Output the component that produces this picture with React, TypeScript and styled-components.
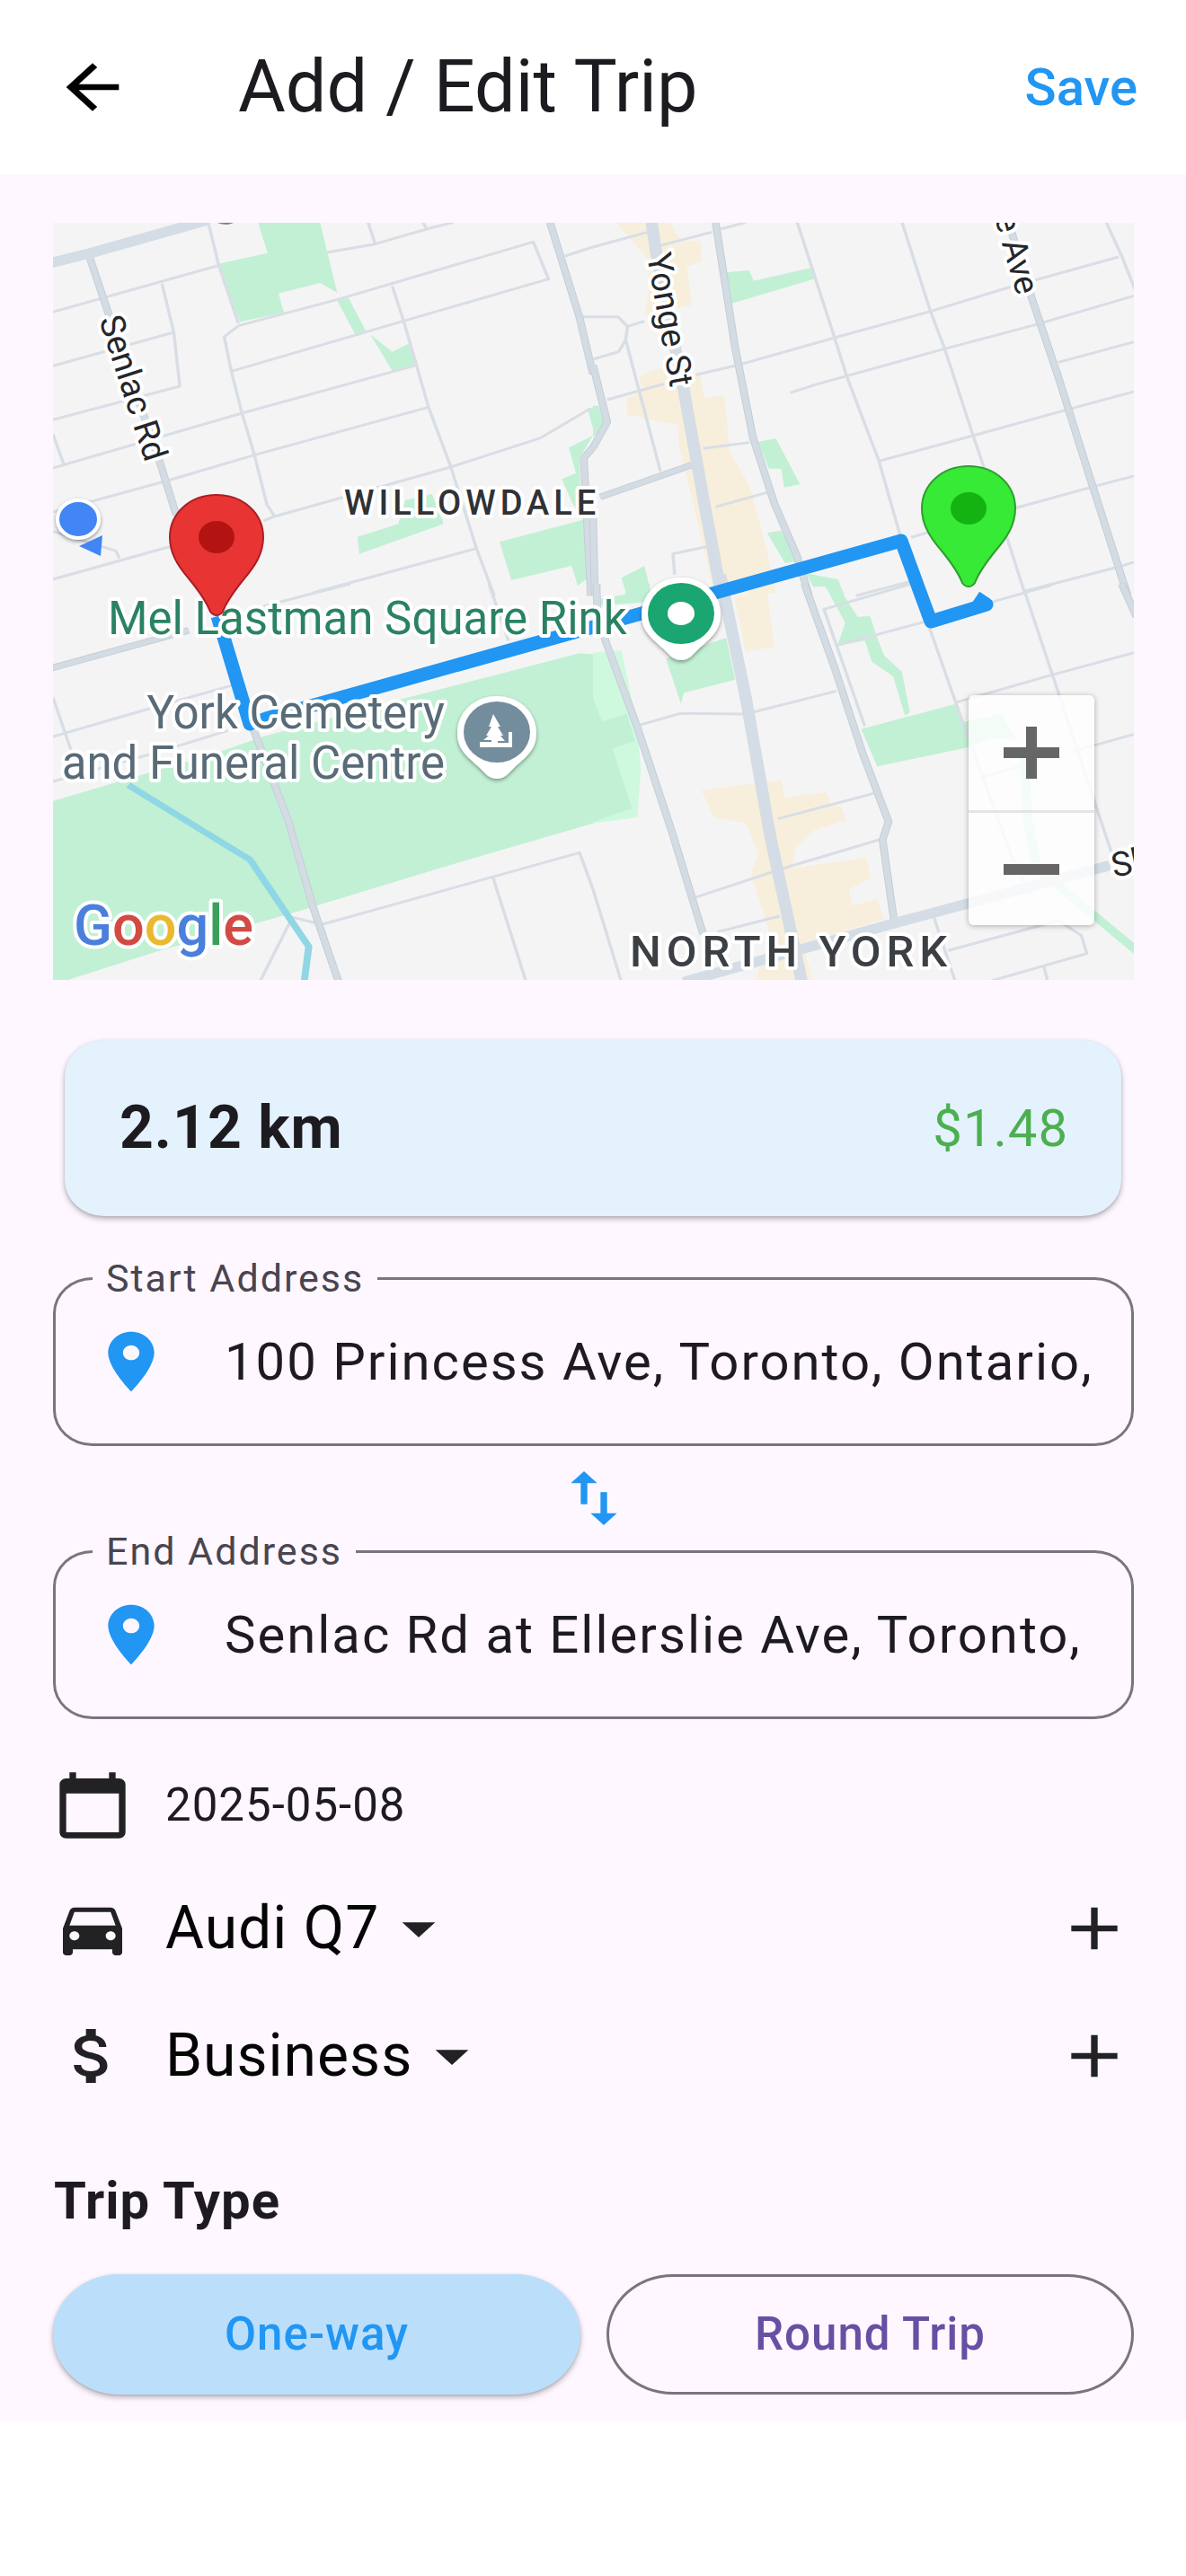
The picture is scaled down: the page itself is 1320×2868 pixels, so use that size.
import React, { useState } from "react";
import styled, { createGlobalStyle } from "styled-components";

const color = {
  ink: "#1d1b20",
  iconInk: "#222124",
  muted: "#49454f",
  outline: "#79747e",
  surface: "#fef7ff",
  blue: "#2196f3",
  purple: "#6750a4",
};

const GlobalStyle = createGlobalStyle`
  *, *::before, *::after { box-sizing: border-box; }
  body {
    margin: 0;
    background: #fff;
    color: ${color.ink};
    font-family: Roboto, "Noto Sans", sans-serif;
  }
  button, input, select { font: inherit; color: inherit; letter-spacing: inherit; }
`;

const Header = styled.header`
  display: flex;
  align-items: center;
  height: 194px;
  padding: 0 54px 0 59px;
  background: #fff;
`;

const Title = styled.h1`
  flex: 1;
  margin: 0 0 0 118px;
  font-size: 81px;
  line-height: 94px;
  font-weight: 400;
`;

const PlainButton = styled.button`
  display: flex;
  align-items: center;
  justify-content: center;
  padding: 0;
  border: 0;
  background: none;
  cursor: pointer;
`;

const SaveButton = styled(PlainButton)`
  color: ${color.blue};
  font-size: 58px;
  line-height: 68px;
  font-weight: 500;
`;

const Main = styled.main`
  display: flex;
  flex-direction: column;
  padding: 54px 58px 30px 59px;
  background: ${color.surface};
`;

const MapFrame = styled.section`
  position: relative;
  line-height: 0;
`;

const MapCanvas = styled.svg`
  display: block;
  width: 100%;
  height: auto;
  font-family: Roboto, "Noto Sans", sans-serif;
`;

const ZoomControls = styled.div`
  position: absolute;
  right: 44px;
  bottom: 61px;
  display: flex;
  flex-direction: column;
  width: 140px;
  border-radius: 6px;
  background: rgba(255, 255, 255, 0.8);
  box-shadow: 0 1px 6px rgba(0, 0, 0, 0.3);
`;

const ZoomButton = styled(PlainButton)`
  height: 128px;
  color: #666;

  & + & {
    border-top: 3px solid #e4e4e4;
  }
`;

const SummaryCard = styled.section`
  display: flex;
  align-items: center;
  justify-content: space-between;
  height: 196px;
  margin: 67px 14px 68px 13px;
  padding: 0 59px 0 61px;
  border-radius: 44px / 40px;
  background: #e3f2fd;
  box-shadow: 0 3px 6px rgba(0, 0, 0, 0.28), 0 1px 3px rgba(0, 0, 0, 0.1);
`;

const Distance = styled.strong`
  font-size: 66px;
  line-height: 76px;
  font-weight: 700;
  letter-spacing: 1px;
`;

const Amount = styled.span`
  font-size: 58px;
  line-height: 68px;
  letter-spacing: 1px;
  color: #4caf50;
`;

const Field = styled.div`
  position: relative;
  display: flex;
  align-items: center;
  gap: 60px;
  height: 188px;
  padding: 0 32px 0 40px;
  border: 3px solid ${color.outline};
  border-radius: 44px / 40px;
`;

const FieldLabel = styled.label`
  position: absolute;
  top: -28px;
  left: 41px;
  padding: 0 15px;
  background: ${color.surface};
  color: ${color.muted};
  font-size: 43px;
  line-height: 52px;
  letter-spacing: 2px;
`;

const FieldInput = styled.input`
  flex: 1;
  min-width: 0;
  padding: 0;
  border: 0;
  outline: 0;
  background: none;
  font-size: 58px;
  line-height: 68px;
  letter-spacing: 2px;
`;

const SwapButton = styled(PlainButton)`
  align-self: center;
  width: 176px;
  height: 116px;
  color: ${color.blue};
`;

const Details = styled.section`
  display: flex;
  flex-direction: column;
  margin-top: 29px;
`;

const DetailRow = styled.div<{ $height: number }>`
  display: flex;
  align-items: center;
  height: ${(p) => p.$height}px;
  color: ${color.iconInk};
`;

const DateButton = styled(PlainButton)`
  margin-left: 37px;
  color: ${color.ink};
  font-size: 51px;
  line-height: 60px;
  letter-spacing: 1px;
`;

const Picker = styled.label`
  display: flex;
  align-items: center;
  margin-right: auto;
  margin-left: 37px;
`;

const Select = styled.select`
  appearance: none;
  field-sizing: content;
  padding: 0;
  border: 0;
  outline: 0;
  background: none;
  color: #050506;
  font-size: 66px;
  line-height: 76px;
  letter-spacing: 1px;
`;

const SectionTitle = styled.h2`
  margin: 56px 0 48px;
  padding-left: 1px;
  font-size: 58px;
  line-height: 68px;
  font-weight: 700;
  letter-spacing: 1px;
`;

const Choices = styled.div`
  display: grid;
  grid-template-columns: 1fr 1fr;
  gap: 29px;
`;

const Choice = styled.button<{ $selected: boolean }>`
  height: 134px;
  padding: 0;
  border: ${(p) => (p.$selected ? "0" : `3px solid ${color.outline}`)};
  border-radius: 74px / 67px;
  background: ${(p) => (p.$selected ? "#bbdefb" : "transparent")};
  box-shadow: ${(p) => (p.$selected ? "0 3px 6px rgba(0, 0, 0, 0.28), 0 1px 3px rgba(0, 0, 0, 0.1)" : "none")};
  color: ${(p) => (p.$selected ? color.blue : color.purple)};
  font-size: 51px;
  line-height: 60px;
  font-weight: 500;
  letter-spacing: 1px;
  cursor: pointer;
`;

const IconSvg = styled.svg`
  flex: none;
  display: block;
  width: 88px;
  height: 80px;
  fill: currentColor;
`;

const Icon = ({ d, tint }: { d: string; tint?: string }) => (
  <IconSvg viewBox="0 0 24 24" preserveAspectRatio="none" aria-hidden="true" color={tint}>
    <path d={d} />
  </IconSvg>
);

const icons = {
  back: "M20 11H7.83l5.59-5.59L12 4l-8 8 8 8 1.41-1.41L7.83 13H20v-2z",
  place:
    "M12 2C8.13 2 5 5.13 5 9c0 5.25 7 13 7 13s7-7.75 7-13c0-3.87-3.13-7-7-7zm0 9.5c-1.38 0-2.5-1.12-2.5-2.5s1.12-2.5 2.5-2.5 2.5 1.12 2.5 2.5-1.12 2.5-2.5 2.5z",
  swap: "M16 17.01V10h-2v7.01h-3L15 21l4-3.99h-3zM9 3L5 6.99h3V14h2V6.99h3L9 3z",
  calendar:
    "M20 3h-1V1h-2v2H7V1H5v2H4c-1.1 0-2 .9-2 2v16c0 1.1.9 2 2 2h16c1.1 0 2-.9 2-2V5c0-1.1-.9-2-2-2zm0 18H4V8h16v13z",
  car: "M18.92 6.01C18.72 5.42 18.16 5 17.5 5h-11c-.66 0-1.21.42-1.42 1.01L3 12v8c0 .55.45 1 1 1h1c.55 0 1-.45 1-1v-1h12v1c0 .55.45 1 1 1h1c.55 0 1-.45 1-1v-8l-2.08-5.99zM6.5 16c-.83 0-1.5-.67-1.5-1.5S5.67 13 6.5 13s1.5.67 1.5 1.5S7.33 16 6.5 16zm11 0c-.83 0-1.5-.67-1.5-1.5s.67-1.5 1.5-1.5 1.5.67 1.5 1.5-.67 1.5-1.5 1.5zM5 11l1.5-4.5h11L19 11H5z",
  money:
    "M11.8 10.9c-2.27-.59-3-1.2-3-2.15 0-1.09 1.01-1.85 2.7-1.85 1.78 0 2.44.85 2.5 2.1h2.21c-.07-1.72-1.12-3.3-3.21-3.81V3h-3v2.16c-1.94.42-3.5 1.68-3.5 3.61 0 2.31 1.91 3.46 4.7 4.13 2.5.6 3 1.48 3 2.41 0 .69-.49 1.79-2.7 1.79-2.06 0-2.87-.92-2.98-2.1h-2.2c.12 2.19 1.76 3.42 3.68 3.83V21h3v-2.15c1.95-.37 3.5-1.5 3.5-3.55 0-2.84-2.43-3.81-4.7-4.4z",
  dropDown: "M7 10l5 5 5-5z",
  add: "M19 13h-6v6h-2v-6H5v-2h6V5h2v6h6v2z",
};

/* Each map tile is drawn in its own 1568-unit-wide grid. */
type Tile = {
  origin: [number, number];
  parks: string;
  brightParks?: string;
  commercial?: string;
  streets: string;
  avenues: string;
  arterials?: string;
  water?: string;
  creek?: string;
};

const tiles: Tile[] = [
  {
    origin: [40, 220],
    parks:
      "M625 83H800L848 318L800 285L683 320L698 385L575 415L510 222L652 185ZM848 345L880 335L932 452L900 460ZM940 455L1003 515L1050 487L1072 555L1003 578ZM905 1133L1020 1090L1040 1010L1115 990L1148 1090L910 1190ZM1305 1150L1545 1075L1555 1270L1525 1297L1508 1230L1338 1278ZM1552 705L1568 700V770ZM1500 835L1568 795L1530 870L1535 1070L1510 1020L1480 940L1520 920Z",
    streets:
      "M48 382L510 228M485 83L515 228L570 420M355 288L388 450L405 630L48 742M48 562L388 450M570 428L530 465L550 580L580 720L615 860L650 1025L672 1065M570 428L850 340L1400 148L1443 272L1035 412L550 580M1003 295L1035 412L1070 555L1105 700L1168 900L1240 1172L1290 1330M48 903L580 720L1070 560M48 1050L380 942L615 860L1105 700M48 790L78 890M640 1080L672 1065L1168 900L1420 803L1560 705M48 1275L380 1165M48 1115L225 1180L235 1205M780 1320L1240 1172M820 183L955 155L1100 105L1175 83M935 83L955 155M1090 83L1100 105M1490 195L1568 165M1530 398H1568",
    avenues: "M150 195L205 390L345 870L395 1060M1447 83L1530 400L1568 590M1568 835L1542 870L1562 1330",
    arterials: "M30 222L155 185L480 76",
  },
  {
    origin: [660, 220],
    parks:
      "M375 250L440 243L452 278L612 235L628 270L388 355ZM465 815L515 805L583 958L538 968L530 905L495 905ZM490 1120L530 1112L580 1215L540 1220ZM80 1270L145 1230L165 1330H95ZM0 695L15 695L35 760L0 800ZM600 1255L690 1275L708 1330L660 1300L620 1300Z",
    commercial:
      "M65 83H215L250 145H305V215L265 230L278 360L145 390L160 290L150 200L100 130ZM130 600L180 570L300 590L315 670L370 660L385 850L440 960L490 1180L515 1320H340L290 1060L240 820V760L95 725V670L140 650Z",
    streets:
      "M0 165L155 115M190 160L335 115M360 105L430 83M0 398H70L97 430L92 475L72 515L0 540M97 430L145 413M92 475L190 915M40 675L200 622M290 592L400 562L680 468L950 380L1170 300L1480 198M575 83L680 468L715 600L805 880L865 1130M870 83L950 380L990 505L1070 795L1100 900L1165 1135L1215 1320M555 652L625 625L990 505L1245 425L1523 328M1445 83L1490 200L1530 320M1310 550L1523 482M805 880L1070 795L1330 710L1523 648M895 1135L1195 1035L1410 965L1523 930M310 838L440 818M345 1033L490 985M230 1260L225 1190L325 1165M740 1330L900 1280M1215 1315L1490 1230L1523 1218",
    avenues:
      "M345 83L400 500L450 800L510 1020L575 1200L608 1330M1170 83L1235 335L1310 600L1400 940L1505 1330M0 560L40 750L0 835M20 1000L285 890M0 1060L5 1330",
    arterials: "M165 83L180 200L255 640L310 1000L362 1330",
  },
  {
    origin: [40, 650],
    parks:
      "M40 728L520 560L640 510L1030 385L1530 232L1568 235V800L1150 945L720 1100L350 1225L85 1325H40Z",
    streets:
      "M640 75L885 0M1275 0L1330 190M48 510L310 420L550 340M48 380L100 560M48 660L350 560L540 490M630 1330L715 1130L725 1115L805 1138L1530 898L1568 1020M1285 975L1380 1330",
    avenues: "M40 283L430 155M610 480L710 790L780 1080L852 1330",
    water: "M260 672L603 922L768 1212L755 1330",
  },
  {
    origin: [660, 650],
    brightParks: "M0 230L80 222L125 470L135 620L125 780L0 800Z",
    parks:
      "M0 380L25 460L95 435L118 525L55 550L110 750L0 795ZM205 250L375 180L400 320L255 365L248 402ZM0 55L90 35L95 0H160V60L0 75ZM650 0H685L745 110L780 108L800 180L820 240L870 295L892 430L878 440L845 310L785 260L765 190L688 207L710 130ZM755 485L1025 400L1040 462L1150 435L1190 520L1120 515L1060 545L800 610Z",
    commercial:
      "M398 45L490 20L510 210L430 228ZM305 690L530 655L540 715L655 695L670 735L700 745L712 790L620 825L570 880L560 950L770 915L782 985L720 1020L730 1075L800 1052L820 1120L590 1200L620 1330H455L500 1180L445 970L465 900L430 800L340 780Z",
    streets:
      "M130 472L245 433L430 435L685 358M520 785L790 700M290 1047L550 945L805 855M350 1163L525 1110M0 1020L80 1330M945 140L1040 460L1180 915L1215 1000M1215 25L1295 310L1460 900M895 0L650 85L765 475M688 205L930 128M1110 65L1290 5M1025 395L1290 305L1523 230M1100 645L1200 610M1350 560L1530 500M960 1115L1020 1330M1000 1225L1310 1125L1375 1175L1390 1235L1110 1330M1270 1280L1280 1330",
    avenues:
      "M595 0L680 280L760 570L832 795L815 855L848 1130M10 0L12 90L35 190L125 480L220 820L310 1170M1488 0L1530 110",
    arterials: "M358 -30L430 380L500 850L588 1330M255 1330L860 1130L1455 940",
    creek: "M1212 540L1225 800L1250 950L1530 1225",
  },
];

const MapTile = ({ tile }: { tile: Tile }) => (
  <g
    transform={`translate(${tile.origin[0]} ${tile.origin[1]}) scale(0.3954 0.3333)`}
    fill="none"
    strokeLinejoin="round"
  >
    {tile.brightParks && <path d={tile.brightParks} fill="#cff9df" />}
    <path d={tile.parks} fill="#c2f0d5" />
    {tile.commercial && <path d={tile.commercial} fill="#f7efdc" />}
    {tile.creek && <path d={tile.creek} stroke="#c2f0d5" strokeWidth="26" />}
    <path d={tile.streets} stroke="#d9dee5" strokeWidth="9" />
    <path d={tile.avenues} stroke="#c5ced8" strokeWidth="22" />
    <path d={tile.avenues} stroke="#d3dbe3" strokeWidth="17" />
    {tile.arterials && <path d={tile.arterials} stroke="#d4dde5" strokeWidth="34" />}
    {tile.water && <path d={tile.water} stroke="#90d7e5" strokeWidth="20" />}
  </g>
);

const MapLabel = styled.text<{ $size: number; $weight?: number; $tracking?: number }>`
  font-size: ${(p) => p.$size}px;
  font-weight: ${(p) => p.$weight ?? 400};
  letter-spacing: ${(p) => p.$tracking ?? 0}px;
  paint-order: stroke;
  stroke: #fff;
  stroke-width: 8px;
  stroke-linejoin: round;
`;

const Pin = ({ x, y, fill, edge, dot }: { x: number; y: number; fill: string; edge: string; dot: string }) => (
  <g transform={`translate(${x} ${y})`}>
    <path
      d="M0-47C30-47 52-26 52 0C52 18 43 32 31 46C18 62 11 72 7 83Q4 87 0 87Q-4 87-7 83C-11 72-18 62-31 46C-43 32-52 18-52 0C-52-26-30-47 0-47Z"
      fill={fill}
      stroke={edge}
      strokeWidth="2"
    />
    <ellipse rx="20" ry="18" fill={dot} />
  </g>
);

const PoiBase = ({ fill }: { fill: string }) => (
  <>
    <path
      d="M0-40C26-40 44-21 44 1C44 20 32 28 20 39L11 48Q0 56-11 48L-20 39C-32 28-44 20-44 1C-44-21-26-40 0-40Z"
      fill="#fff"
      filter="url(#poi-shadow)"
    />
    <ellipse rx="37" ry="34" fill={fill} />
  </>
);

const TripMap = () => (
  <MapCanvas viewBox="59 248 1203 843" role="img" aria-label="Trip route map">
    <defs>
      <filter id="poi-shadow" x="-20%" y="-20%" width="140%" height="140%">
        <feDropShadow dx="0" dy="2" stdDeviation="2" floodOpacity="0.4" />
      </filter>
    </defs>
    <rect x="59" y="248" width="1203" height="843" fill="#f5f4f5" />
    {tiles.map((tile) => (
      <MapTile key={tile.origin.join()} tile={tile} />
    ))}
    <ellipse cx="251" cy="245" rx="11" ry="5" fill="#8d7f86" />

    <path
      d="M242 686L278 806L296 800L1003 602L1036 692L1098 673L1086 665"
      fill="none"
      stroke={color.blue}
      strokeWidth="15"
      strokeLinejoin="round"
    />

    <MapLabel $size={38} fill="#24262a" transform="translate(110 356) rotate(72)">Senlac Rd</MapLabel>
    <MapLabel $size={38} fill="#24262a" transform="translate(720 284) rotate(80)">Yonge St</MapLabel>
    <MapLabel $size={38} fill="#24262a" textAnchor="end" transform="translate(1132 330) rotate(74)">e Ave</MapLabel>
    <MapLabel $size={38} fill="#24262a" transform="translate(1240 977) rotate(-12)">Sh</MapLabel>
    <MapLabel $size={38} $weight={500} $tracking={5} fill="#303235" x="383" y="573">WILLOWDALE</MapLabel>
    <MapLabel $size={49} $weight={500} $tracking={6} fill="#3c3f43" x="701" y="1076">NORTH YORK</MapLabel>
    <MapLabel $size={51} fill="#2a8262" x="120" y="706">Mel Lastman Square Rink</MapLabel>
    <MapLabel $size={51} fill="#586b77" textAnchor="end" x="495" y="811">York Cemetery</MapLabel>
    <MapLabel $size={51} fill="#586b77" textAnchor="end" x="495" y="867">and Funeral Centre</MapLabel>
    <MapLabel $size={63} $weight={500} x="82" y="1052">
      <tspan fill="#4a80dc">G</tspan>
      <tspan fill="#d24a42">o</tspan>
      <tspan fill="#e9b92f">o</tspan>
      <tspan fill="#4a80dc">g</tspan>
      <tspan fill="#3ba05a">l</tspan>
      <tspan fill="#d24a42">e</tspan>
    </MapLabel>

    <g transform="translate(553 815)">
      <PoiBase fill="#738d9c" />
      <path d="M-4-20L4-6H1L7 4H4L9 10H1V12H13V0H17V17H-19V11H-6V9H-15L-9 4H-12L-6-6H-9Z" fill="#fff" />
    </g>
    <g transform="translate(758 683)">
      <PoiBase fill="#1aa571" />
      <ellipse rx="15" ry="13" fill="#fff" />
    </g>

    <ellipse cx="87" cy="578" rx="23" ry="21" fill="#4285f4" stroke="#fff" strokeWidth="4" filter="url(#poi-shadow)" />
    <path d="M88 608L114 596L112 619Z" fill="#4285f4" />
    <Pin x={241} y={598} fill="#e93434" edge="#a82025" dot="#b31412" />
    <Pin x={1078} y={566} fill="#36ea36" edge="#2f9e2f" dot="#14b312" />
  </MapCanvas>
);

const ZoomGlyph = styled.svg`
  display: block;
  width: 62px;
  height: 58px;
  fill: currentColor;
`;

type AddressProps = { id: string; label: string; value: string; onChange: (value: string) => void };

const AddressField = ({ id, label, value, onChange }: AddressProps) => (
  <Field>
    <FieldLabel htmlFor={id}>{label}</FieldLabel>
    <Icon d={icons.place} tint={color.blue} />
    <FieldInput id={id} type="text" value={value} onChange={(e) => onChange(e.target.value)} />
  </Field>
);

type PickerRowProps = { icon: string; name: string; options: string[] };

const PickerRow = ({ icon, name, options }: PickerRowProps) => (
  <DetailRow $height={142}>
    <Icon d={icon} />
    <Picker>
      <Select aria-label={name} defaultValue={options[0]}>
        {options.map((option) => (
          <option key={option}>{option}</option>
        ))}
      </Select>
      <Icon d={icons.dropDown} />
    </Picker>
    <PlainButton type="button" aria-label={`Add ${name.toLowerCase()}`}>
      <Icon d={icons.add} tint={color.iconInk} />
    </PlainButton>
  </DetailRow>
);

export default function App() {
  const [start, setStart] = useState("100 Princess Ave, Toronto, Ontario,");
  const [end, setEnd] = useState("Senlac Rd at Ellerslie Ave, Toronto,");
  const [tripType, setTripType] = useState("One-way");

  const swapAddresses = () => {
    setStart(end);
    setEnd(start);
  };

  return (
    <>
      <GlobalStyle />
      <Header>
        <PlainButton type="button" aria-label="Back">
          <Icon d={icons.back} tint="#000" />
        </PlainButton>
        <Title>Add / Edit Trip</Title>
        <SaveButton type="button">Save</SaveButton>
      </Header>
      <Main>
        <MapFrame>
          <TripMap />
          <ZoomControls>
            <ZoomButton type="button" aria-label="Zoom in">
              <ZoomGlyph viewBox="0 0 62 58">
                <path d="M25 0H37V23H62V35H37V58H25V35H0V23H25Z" />
              </ZoomGlyph>
            </ZoomButton>
            <ZoomButton type="button" aria-label="Zoom out">
              <ZoomGlyph viewBox="0 0 62 58">
                <path d="M0 23H62V35H0Z" />
              </ZoomGlyph>
            </ZoomButton>
          </ZoomControls>
        </MapFrame>

        <SummaryCard>
          <Distance>2.12 km</Distance>
          <Amount>$1.48</Amount>
        </SummaryCard>

        <AddressField id="start-address" label="Start Address" value={start} onChange={setStart} />
        <SwapButton type="button" aria-label="Swap addresses" onClick={swapAddresses}>
          <Icon d={icons.swap} />
        </SwapButton>
        <AddressField id="end-address" label="End Address" value={end} onChange={setEnd} />

        <Details>
          <DetailRow $height={133}>
            <Icon d={icons.calendar} />
            <DateButton type="button">2025-05-08</DateButton>
          </DetailRow>
          <PickerRow icon={icons.car} name="Vehicle" options={["Audi Q7"]} />
          <PickerRow icon={icons.money} name="Category" options={["Business"]} />
        </Details>

        <SectionTitle>Trip Type</SectionTitle>
        <Choices>
          {["One-way", "Round Trip"].map((type) => (
            <Choice
              key={type}
              type="button"
              aria-pressed={tripType === type}
              $selected={tripType === type}
              onClick={() => setTripType(type)}
            >
              {type}
            </Choice>
          ))}
        </Choices>
      </Main>
    </>
  );
}
